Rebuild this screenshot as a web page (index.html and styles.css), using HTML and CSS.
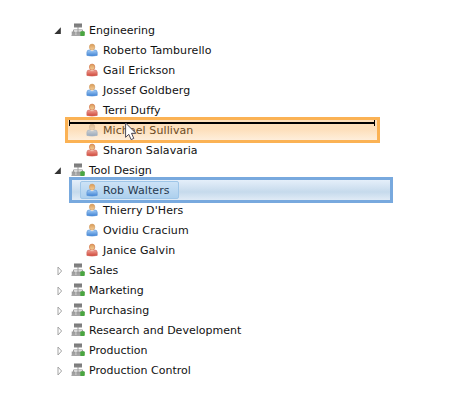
FILE: index.html
```html
<!DOCTYPE html>
<html lang="en">
<head>
<meta charset="utf-8">
<title>Departments</title>
<link rel="stylesheet" href="styles.css">
</head>
<body>
<svg class="defs" aria-hidden="true">
  <defs>
    <linearGradient id="gray" x1="0" y1="0" x2="0" y2="1"><stop offset="0" stop-color="#777"/><stop offset="1" stop-color="#a8a8a8"/></linearGradient>
    <linearGradient id="skin" x1="0" y1="0" x2="0" y2="1"><stop offset="0" stop-color="#d99a55"/><stop offset="1" stop-color="#f5cf9d"/></linearGradient>
    <linearGradient id="blue" x1="0" y1="0" x2="0" y2="1"><stop offset="0" stop-color="#a5cdf5"/><stop offset="1" stop-color="#3f82d4"/></linearGradient>
    <linearGradient id="red" x1="0" y1="0" x2="0" y2="1"><stop offset="0" stop-color="#f0a297"/><stop offset="1" stop-color="#cf4638"/></linearGradient>
    <symbol id="open" viewBox="0 0 10 20"><path d="M10.8 7.3V14H4.4Z" fill="#333"/></symbol>
    <symbol id="closed" viewBox="0 0 10 20"><path d="M8 7L11.6 11L8 15Z" fill="#fff" stroke="#a3a3a3"/></symbol>
    <symbol id="dept" viewBox="0 0 14 20">
      <path d="M7 7V12M2.5 12V9.9H11.5V12" fill="none" stroke="#a0a0a0"/>
      <path d="M3 3.5H11V7.6H3ZM.7 11.4H4.7V15.6H.7ZM5.2 11.4H9V15.6H5.2ZM9.5 11.4H13V15.6H9.5Z" fill="url(#gray)"/>
      <path d="M.5 15.5H10" stroke="#a5a5a5"/>
      <rect x="9.2" y="11.2" width="4.6" height="4.8" rx="1" fill="#4aa541"/>
    </symbol>
    <symbol id="man" viewBox="0 0 12 20">
      <path d="M.9 15.4V12.4Q.9 10 3.4 10H8.7Q11.2 10 11.2 12.4V15.4Q6 16.7 .9 15.4Z" fill="url(#blue)" stroke="#5c97da" stroke-width=".7"/>
      <path d="M4 10L6 11.3L8.2 10Z" fill="#fff"/>
      <ellipse cx="6.1" cy="7.1" rx="2.7" ry="3" fill="url(#skin)" stroke="#d2a068" stroke-width=".7"/>
    </symbol>
    <symbol id="woman" viewBox="0 0 12 20">
      <path d="M.9 15.4V12.4Q.9 10 3.4 10H8.7Q11.2 10 11.2 12.4V15.4Q6 16.7 .9 15.4Z" fill="url(#red)" stroke="#d46a5e" stroke-width=".7"/>
      <path d="M4 10L6 11.3L8.2 10Z" fill="#fde6dc"/>
      <ellipse cx="6.1" cy="7.1" rx="2.7" ry="3" fill="url(#skin)" stroke="#d88458" stroke-width=".8"/>
    </symbol>
  </defs>
</svg>
<ul class="tree">
  <li class="row"><svg class="arrow"><use href="#open"/></svg><svg class="dept"><use href="#dept"/></svg><span>Engineering</span></li>
  <li class="row leaf"><svg class="person"><use href="#man"/></svg><span>Roberto Tamburello</span></li>
  <li class="row leaf"><svg class="person"><use href="#woman"/></svg><span>Gail Erickson</span></li>
  <li class="row leaf"><svg class="person"><use href="#man"/></svg><span>Jossef Goldberg</span></li>
  <li class="row leaf"><svg class="person"><use href="#woman"/></svg><span>Terri Duffy</span></li>
  <li class="row leaf target"><svg class="person"><use href="#man"/></svg><span>Michael Sullivan</span>
    <i class="drop-line"></i>
    <svg class="cursor" viewBox="0 0 12 19"><path d="M.6 1V15.3L3.8 12.3L6.1 17.6L8.8 16.4L6.5 11.3H10.9Z" fill="#fff" stroke="#4d4a58" stroke-width="1"/></svg>
  </li>
  <li class="row leaf"><svg class="person"><use href="#woman"/></svg><span>Sharon Salavaria</span></li>
  <li class="row"><svg class="arrow"><use href="#open"/></svg><svg class="dept"><use href="#dept"/></svg><span>Tool Design</span></li>
  <li class="row leaf selected"><svg class="person"><use href="#man"/></svg><span>Rob Walters</span></li>
  <li class="row leaf"><svg class="person"><use href="#man"/></svg><span>Thierry D'Hers</span></li>
  <li class="row leaf"><svg class="person"><use href="#man"/></svg><span>Ovidiu Cracium</span></li>
  <li class="row leaf"><svg class="person"><use href="#woman"/></svg><span>Janice Galvin</span></li>
  <li class="row"><svg class="arrow"><use href="#closed"/></svg><svg class="dept"><use href="#dept"/></svg><span>Sales</span></li>
  <li class="row"><svg class="arrow"><use href="#closed"/></svg><svg class="dept"><use href="#dept"/></svg><span>Marketing</span></li>
  <li class="row"><svg class="arrow"><use href="#closed"/></svg><svg class="dept"><use href="#dept"/></svg><span>Purchasing</span></li>
  <li class="row"><svg class="arrow"><use href="#closed"/></svg><svg class="dept"><use href="#dept"/></svg><span>Research and Development</span></li>
  <li class="row"><svg class="arrow"><use href="#closed"/></svg><svg class="dept"><use href="#dept"/></svg><span>Production</span></li>
  <li class="row"><svg class="arrow"><use href="#closed"/></svg><svg class="dept"><use href="#dept"/></svg><span>Production Control</span></li>
</ul>
</body>
</html>
```
FILE: styles.css
```css
body {
  margin: 0;
  background: #fff;
  color: #111;
  font: 11px/20px Verdana, "DejaVu Sans", sans-serif;
}
.defs { position: absolute; width: 0; height: 0; }
.tree { list-style: none; margin: 0; padding: 20px 0 0 50px; }
.row { display: flex; position: relative; height: 20px; white-space: nowrap; }
.row > span { padding-top: 1px; line-height: 19px; }
.row svg { flex: none; height: 20px; }
.arrow { width: 10px; margin-right: 11px; overflow: visible; }
#open, #closed { overflow: visible; }
.dept { width: 14px; margin-right: 4px; }
.leaf { padding-left: 36px; }
.leaf > span { letter-spacing: .09px; }
.person { width: 12px; margin-right: 5px; }
.target, .selected { z-index: 1; }
.target > span { color: #6b4b25; }
.target::before {
  content: "";
  position: absolute;
  box-sizing: border-box;
  z-index: -1;
  left: 15px;
  top: -3px;
  width: 315px;
  height: 26px;
  border: 3px solid #fbb254;
  background: linear-gradient(#fddfba, #fde0bd 50%, #feeedb);
}
.target .person { opacity: .6; filter: saturate(.6); }
.drop-line {
  position: absolute;
  left: 19px;
  top: 0;
  width: 306px;
  height: 6px;
  box-sizing: border-box;
  border: solid #000;
  border-width: 0 1px;
  background: linear-gradient(#000, #000) 0 2px / 100% 2px no-repeat;
}
.row .cursor { position: absolute; left: 75px; top: 2px; width: 12px; height: 19px; }
.selected > span { color: #26394e; }
.selected::before {
  content: "";
  position: absolute;
  box-sizing: border-box;
  z-index: -2;
  left: 19px;
  top: -3px;
  width: 324px;
  height: 26px;
  border: 3px solid #78a9de;
  background: linear-gradient(#e5effa, #c6daec 60%, #e0ebf6);
}
.selected::after {
  content: "";
  position: absolute;
  box-sizing: border-box;
  z-index: -1;
  left: 30px;
  top: 1px;
  width: 99px;
  height: 18px;
  border: 1px solid #9fc6e8;
  border-radius: 2px;
  background: linear-gradient(#cce2f6, #add0ee);
}
```
